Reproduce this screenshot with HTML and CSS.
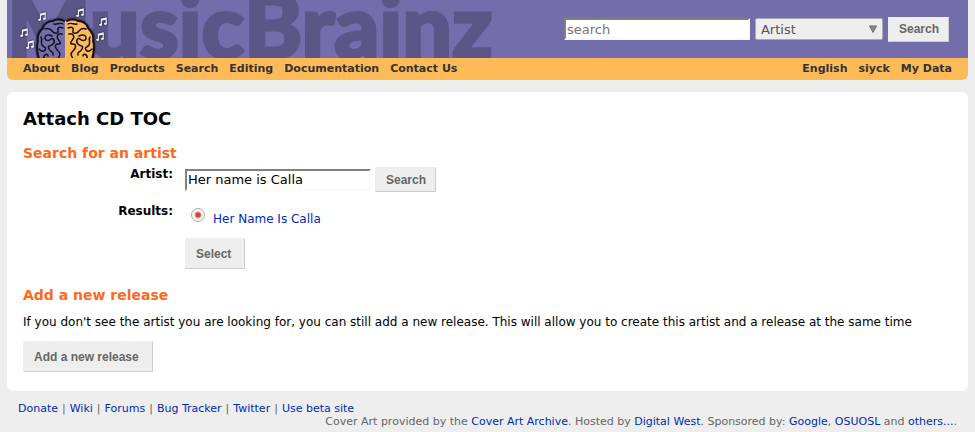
FILE: index.html
```html
<!DOCTYPE html>
<html lang="en">
<head>
<meta charset="utf-8">
<title>Attach CD TOC - MusicBrainz</title>
<link rel="stylesheet" href="styles.css">
</head>
<body>
<header class="header">
  <div class="banner">
    <a class="logo" href="#" aria-label="MusicBrainz home">
      <span class="wordmark">MusicBrainz</span>
      <svg class="brain" viewBox="0 0 92 52" width="92" height="52" aria-hidden="true">
        <defs>
          <symbol id="note" viewBox="0 0 10 12" overflow="visible">
            <path d="M3 9V2.500L9 1V8M3 3.600L9 2.200" fill="none" stroke="#f4f3fa" stroke-width="1.400"/>
            <ellipse cx="2" cy="9.500" rx="1.900" ry="1.400" fill="#f4f3fa"/>
            <ellipse cx="8" cy="8.300" rx="1.900" ry="1.400" fill="#f4f3fa"/>
          </symbol>
        </defs>
        <g class="notes">
          <use href="#note" x="1" y="22" width="8" height="10"/>
          <use href="#note" x="7" y="34" width="8" height="10"/>
          <use href="#note" x="19" y="6" width="8" height="10"/>
          <use href="#note" x="57" y="2" width="8" height="10"/>
          <use href="#note" x="80" y="11" width="8" height="10"/>
          <use href="#note" x="77" y="26" width="8" height="10"/>
        </g>
        <g class="lobes">
          <path d="M46 15C42 13 37 13 34 15C29 15 25 18 24 22C20 26 18 31 19 35C17 40 18 46 20 53H46Z" fill="#736dab"/>
          <path d="M46 15C51 13 56 13 59 15C64 15 68 18 69 22C73 26 75 31 74 35C76 40 75 46 73 53H46Z" fill="#ffba58"/>
          <g id="folds" fill="none" stroke="#14121c" stroke-linecap="round">
            <path stroke-width="2" d="M45 15C42 13 37 13 34 15C29 15 25 18 24 22C20 26 18 31 19 35C17 40 18 46 20 53"/>
            <path stroke-width="1.500" d="M44 18C41 16 38 19 35 18M44 22C40 20 38 22 39 25S35 28 33 25S29 22 26 23M43 28C39 27 37 30 39 33S43 38 39 38S36 42 39 45S41 49 39 53M33 30C29 28 26 29 26 32S30 35 32 33S37 35 34 38S28 39 30 43S35 45 34 49M22 31C24 34 21 36 23 39S28 41 26 44S21 44 20 43M25 53C24 48 29 47 29 50"/>
          </g>
          <use href="#folds" transform="translate(93 0) scale(-1 1)"/>
        </g>
      </svg>
    </a>
    <form class="search">
      <input class="field" type="text" placeholder="search" aria-label="Search terms">
      <span class="picker">
        <select aria-label="Search type"><option>Artist</option></select>
        <svg class="arrow" viewBox="0 0 8 8" width="8" height="8" aria-hidden="true"><path d="M.5 1H7.500L4 7.500Z" fill="#8a8a8a" stroke="#6a6a6a"/></svg>
      </span>
      <button class="button" type="button">Search</button>
    </form>
  </div>
  <nav class="nav">
    <ul>
      <li><a href="#">About</a></li>
      <li><a href="#">Blog</a></li>
      <li><a href="#">Products</a></li>
      <li><a href="#">Search</a></li>
      <li><a href="#">Editing</a></li>
      <li><a href="#">Documentation</a></li>
      <li><a href="#">Contact Us</a></li>
    </ul>
    <ul>
      <li><a href="#">English</a></li>
      <li><a href="#">siyck</a></li>
      <li><a href="#">My Data</a></li>
    </ul>
  </nav>
</header>
<main class="page">
  <h1>Attach CD TOC</h1>
  <h2>Search for an artist</h2>
  <form class="lookup">
    <label class="label" for="artist">Artist:</label>
    <div class="row">
      <input class="field" id="artist" type="text" value="Her name is Calla">
      <button class="button" type="button">Search</button>
    </div>
    <span class="label" id="results">Results:</span>
    <div class="result" role="radiogroup" aria-labelledby="results">
      <input id="result-1" type="radio" name="result" checked aria-label="Her Name Is Calla">
      <a href="#">Her Name Is Calla</a>
    </div>
    <button class="button tall select" type="button">Select</button>
  </form>
  <h2>Add a new release</h2>
  <p>If you don't see the artist you are looking for, you can still add a new release. This will allow you to create this artist and a release at the same time</p>
  <button class="button tall" type="button">Add a new release</button>
</main>
<footer class="footer">
  <p class="links"><a href="#">Donate</a> <span>|</span> <a href="#">Wiki</a> <span>|</span> <a href="#">Forums</a> <span>|</span> <a href="#">Bug Tracker</a> <span>|</span> <a href="#">Twitter</a> <span>|</span> <a href="#">Use beta site</a></p>
  <p class="credits">Cover Art provided by the <a href="#">Cover Art Archive</a>. Hosted by <a href="#">Digital West</a>. Sponsored by: <a href="#">Google</a>, <a href="#">OSUOSL</a> and <a href="#">others...</a>.</p>
</footer>
</body>
</html>
```
FILE: styles.css
```css
* { box-sizing: border-box; }

body {
  margin: 0;
  padding: 0 7px;
  background: #eee;
  color: #000;
  font: 12px/16px "DejaVu Sans", sans-serif;
}

a { color: #002bba; text-decoration: none; }
h1, h2, p, ul { margin: 0; padding: 0; }

.header { border-radius: 0 0 6px 6px; overflow: hidden; }

.banner {
  display: flex;
  align-items: center;
  justify-content: space-between;
  height: 58px;
  padding-right: 19px;
  background: #736dab;
}

.logo {
  position: relative;
  height: 58px;
  overflow: hidden;
}

.wordmark {
  display: block;
  color: #5b5688;
  font: 900 88px/48px Lato, sans-serif;
  -webkit-text-stroke: 3px #5b5688;
}

.brain { position: absolute; left: 12px; bottom: 0; }
.notes, .lobes { filter: drop-shadow(0 0 1px #14121c); }

.search { display: flex; align-items: center; gap: 5px; }

input, select, button { margin: 0; font-family: inherit; }

.field {
  width: 186px;
  height: 22px;
  padding: 0 1px;
  border: 2px solid #fafafa;
  border-color: #808080 #fafafa #fafafa #808080;
  background: #fff;
  color: #000;
  font-size: 13px;
}
.field::placeholder { color: #757575; }

.picker { position: relative; display: flex; }
.picker select {
  appearance: none;
  width: 128px;
  height: 22px;
  padding: 0 20px 0 5px;
  border: 1px solid #aaa;
  border-radius: 2px;
  background: #eee;
  color: #555;
  font-size: 13px;
}
.arrow { position: absolute; right: 6px; top: 7px; pointer-events: none; }

.button {
  height: 25px;
  padding: 0 9px 0 10px;
  border: 1px solid #eee;
  border-color: #eee #ccc #ccc #eee;
  background: #eee;
  color: #666;
  font: bold 12px/16px "Liberation Sans", sans-serif;
}
.tall { height: 31px; padding-right: 13px; }

.nav {
  display: flex;
  justify-content: space-between;
  padding: 3px 16px;
  background: #ffba58;
}
.nav ul { display: flex; gap: 11px; list-style: none; font-size: 11px; font-weight: bold; }
.nav a { color: #333; }

.page {
  margin-top: 12px;
  padding: 16px 16px 19px;
  border-radius: 6px;
  background: #fff;
}

h1 { font-size: 18px; line-height: 22px; }
h2 { margin-top: 14px; color: #fc6a1b; font-size: 14px; line-height: 18px; }
.page p { margin: 10px 0 11px; }

.lookup {
  display: grid;
  grid-template-columns: 150px 1fr;
  column-gap: 12px;
  margin: 4px 0 17px;
}
.label { font-weight: bold; text-align: right; }
.row { display: flex; align-items: center; gap: 4px; height: 37px; padding-bottom: 10px; }
.result { display: flex; gap: 8px; height: 35px; padding-left: 6px; }
.result a { padding-top: 8px; }
.result input {
  appearance: none;
  width: 14px;
  height: 14px;
  margin-top: 5px;
  border: 1px solid #aaa;
  border-radius: 50%;
  background: radial-gradient(circle, #d9442f 2px, #f6f6f6 4px);
}
.select { grid-column: 2; justify-self: start; }

.footer { padding: 11px; color: #666; font-size: 11px; line-height: 13px; }
.links { display: flex; gap: 4px; }
.credits { text-align: right; }
```
